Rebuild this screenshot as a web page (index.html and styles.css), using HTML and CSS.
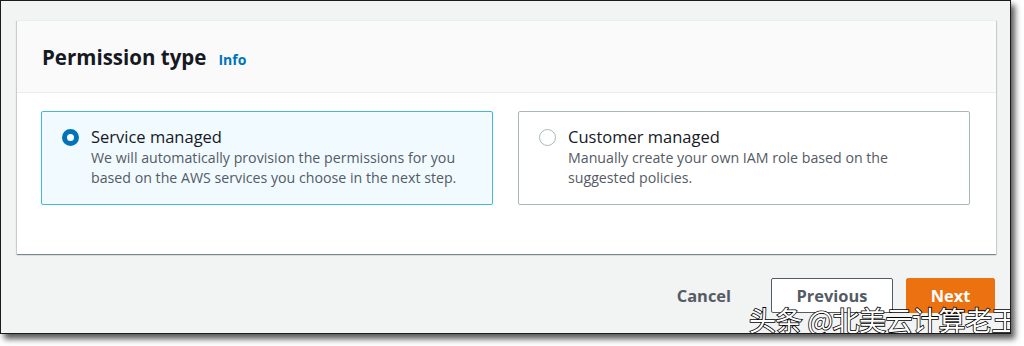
FILE: index.html
```html
<!DOCTYPE html>
<html>
<head>
<meta charset="utf-8">
<link rel="stylesheet" href="styles.css">
</head>
<body>
<div class="frame">
  <section class="card">
    <header class="card-header">
      <h2 class="card-title">Permission type</h2>
      <a class="info-link">Info</a>
    </header>
    <div class="card-body">
      <div class="tile tile-selected">
        <span class="radio radio-on"></span>
        <div class="tile-text">
          <div class="tile-title">Service managed</div>
          <div class="tile-desc">We will automatically provision the permissions for you based on the AWS services you choose in the next step.</div>
        </div>
      </div>
      <div class="tile">
        <span class="radio"></span>
        <div class="tile-text">
          <div class="tile-title">Customer managed</div>
          <div class="tile-desc">Manually create your own IAM role based on the suggested policies.</div>
        </div>
      </div>
    </div>
  </section>
  <footer class="actions">
    <button class="btn btn-link">Cancel</button>
    <button class="btn btn-normal">Previous</button>
    <button class="btn btn-primary">Next</button>
  </footer>
  <div class="watermark">头条 @北美云计算老王</div>
</div>
</body>
</html>
```
FILE: styles.css
```css
* { box-sizing: border-box; }
html, body { margin: 0; padding: 0; background: #ffffff; }
body { width: 1024px; height: 346px; overflow: hidden; font-family: "Open Sans", "Noto Sans", sans-serif; }

.frame {
  position: relative;
  width: 1011px;
  height: 334px;
  border: 1px solid #1b1b1b;
  background: #f2f3f3;
  box-shadow: 4px 5px 6px rgba(0,0,0,0.65);
  padding: 19px 0 0 16px;
  overflow: hidden;
}

.card {
  width: 979px;
  background: #ffffff;
  box-shadow: 0 1px 1px 0 rgba(0,28,36,0.35), 1px 1px 1px 0 rgba(0,28,36,0.12), -1px 1px 1px 0 rgba(0,28,36,0.12);
  border-top: 1px solid #eaeded;
}

.card-header {
  display: flex;
  align-items: baseline;
  gap: 12px;
  height: 72px;
  padding: 23px 25px 0;
  background: #fafafa;
  border-bottom: 1px solid #eaeded;
}
.card-title {
  margin: 0;
  font-size: 20.5px;
  font-weight: 700;
  color: #16191f;
  line-height: 26px;
}
.info-link {
  font-size: 14px;
  font-weight: 700;
  color: #0073bb;
}

.card-body {
  display: flex;
  gap: 25px;
  padding: 18px 26px 49px 24px;
}

.tile {
  flex: 1;
  display: flex;
  gap: 12px;
  height: 94px;
  padding: 14px 18px 0 20px;
  border: 1px solid #aab7b8;
  border-radius: 2px;
  background: #ffffff;
}
.tile-selected {
  border-color: #44b9d6;
  background: #f1faff;
}

.radio {
  flex: none;
  width: 17px;
  height: 17px;
  margin-top: 3px;
  border-radius: 50%;
  border: 1px solid #aab7b8;
  background: #ffffff;
}
.radio-on {
  border: 5px solid #0073bb;
}

.tile-title {
  font-size: 16.5px;
  line-height: 22px;
  color: #16191f;
}
.tile-desc {
  font-size: 14.2px;
  line-height: 20px;
  color: #545b64;
}

.actions {
  display: flex;
  justify-content: flex-end;
  align-items: center;
  gap: 13px;
  padding: 24px 15px 0 0;
}
.btn {
  font-family: "Open Sans", "Noto Sans", sans-serif;
  font-size: 16.4px;
  font-weight: 700;
  height: 35px;
  padding: 0 16px;
  border-radius: 2px;
  cursor: pointer;
}
.btn-link {
  background: transparent;
  border: 1px solid transparent;
  color: #545b64;
  margin-right: 10px;
}
.btn-normal {
  width: 122px;
  background: #ffffff;
  border: 1px solid #545b64;
  color: #545b64;
}
.btn-primary {
  width: 89px;
  background: #ec7211;
  border: 1px solid #ec7211;
  color: #ffffff;
}

.watermark {
  position: absolute;
  right: -8px;
  bottom: -4px;
  font-family: "Noto Sans CJK SC", sans-serif;
  font-size: 27px;
  line-height: 34px;
  color: #ffffff;
  letter-spacing: -0.5px;
  -webkit-text-stroke: 1.6px #000000;
  paint-order: stroke fill;
}
```
